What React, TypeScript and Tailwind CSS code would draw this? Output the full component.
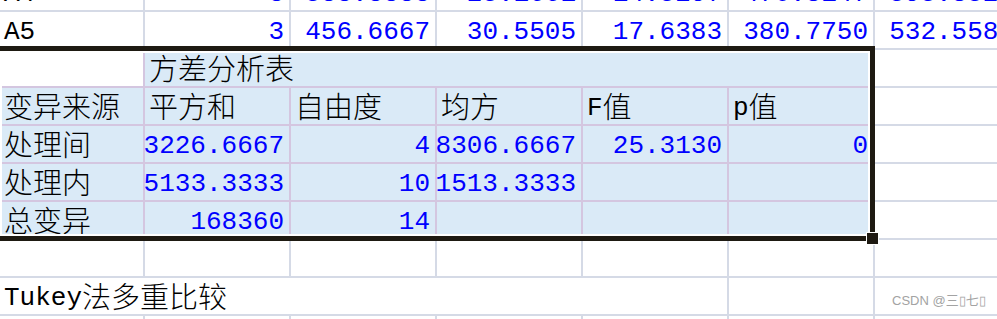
import React from 'react';

type Row = { cells: CellDef[] };
type CellDef = { t?: string; num?: boolean; sel?: boolean; active?: boolean; span?: string };

const CJK = /([\u4e00-\u9fff]+)/;

function Txt({ s }: { s: string }) {
  const parts = s.split(CJK);
  return (
    <>
      {parts.map((p, i) =>
        CJK.test(p) ? (
          <span key={i} className="align-[-3px] font-['Noto_Sans_CJK_SC',sans-serif] text-[29px] font-light">
            {p}
          </span>
        ) : (
          <React.Fragment key={i}>{p}</React.Fragment>
        )
      )}
    </>
  );
}

function Cell({ t, num, sel, active, span }: CellDef) {
  const tint = sel || active;
  return (
    <div
      className={[
        'flex h-[38px] items-end overflow-hidden whitespace-nowrap border-r-2 border-b-2',
        tint ? 'border-[#d4c6e0]' : 'border-[#d5dae6]',
        sel ? 'bg-[#daeaf7]' : 'bg-white',
        num ? 'justify-end pr-[5px] text-[#0000ff]' : 'justify-start pl-[4px] text-black',
        span ?? '',
      ].join(' ')}
    >
      {t && (
        <span className="pb-[1px] leading-[30px]">
          <Txt s={t} />
        </span>
      )}
    </div>
  );
}

const blank = (n: number, sel = false): CellDef[] => Array.from({ length: n }, () => ({ sel }));

const rows: Row[] = [
  {
    cells: [
      { t: 'A4' },
      { t: '3', num: true },
      { t: '533.3333', num: true },
      { t: '25.1661', num: true },
      { t: '14.5297', num: true },
      { t: '470.8147', num: true },
      { t: '595.8520', num: true },
    ],
  },
  {
    cells: [
      { t: 'A5' },
      { t: '3', num: true },
      { t: '456.6667', num: true },
      { t: '30.5505', num: true },
      { t: '17.6383', num: true },
      { t: '380.7750', num: true },
      { t: '532.5583', num: true },
    ],
  },
  {
    cells: [{ active: true }, { t: '方差分析表', sel: true, span: 'col-span-5' }, {}],
  },
  {
    cells: [
      { t: '变异来源', sel: true },
      { t: '平方和', sel: true },
      { t: '自由度', sel: true },
      { t: '均方', sel: true },
      { t: 'F值', sel: true },
      { t: 'p值', sel: true },
      {},
    ],
  },
  {
    cells: [
      { t: '处理间', sel: true },
      { t: '153226.6667', num: true, sel: true },
      { t: '4', num: true, sel: true },
      { t: '38306.6667', num: true, sel: true },
      { t: '25.3130', num: true, sel: true },
      { t: '0', num: true, sel: true },
      {},
    ],
  },
  {
    cells: [
      { t: '处理内', sel: true },
      { t: '15133.3333', num: true, sel: true },
      { t: '10', num: true, sel: true },
      { t: '1513.3333', num: true, sel: true },
      ...blank(2, true),
      {},
    ],
  },
  {
    cells: [
      { t: '总变异', sel: true },
      { t: '168360', num: true, sel: true },
      { t: '14', num: true, sel: true },
      ...blank(3, true),
      {},
    ],
  },
  { cells: blank(7) },
  { cells: [{ t: 'Tukey法多重比较', span: 'col-span-5' }, {}, {}] },
  { cells: blank(7) },
];

export default function App() {
  return (
    <div className="relative h-[319px] w-[997px] overflow-hidden bg-white font-['Liberation_Mono','Noto_Sans_CJK_SC',monospace] text-[26px]">
      <div className="-mt-[26px] grid w-[1021px] grid-cols-[145px_repeat(6,146px)]">
        {rows.map((r, i) => (
          <React.Fragment key={i}>
            {r.cells.map((c, j) => (
              <Cell key={j} {...c} />
            ))}
          </React.Fragment>
        ))}
      </div>

      {/* selection border */}
      <div className="pointer-events-none absolute left-[-5px] top-[46px] h-[195px] w-[880px] border-[5px] border-[#1e1a12]">
        <div className="absolute inset-0 border-2 border-white" />
      </div>
      <div className="pointer-events-none absolute left-[866px] top-[232px] h-[13px] w-[13px] border border-white bg-[#1e1a12]" />

      <div className="absolute left-[892px] top-[294px] font-['Liberation_Sans','Noto_Sans_CJK_SC',sans-serif] text-[13px] leading-none text-[#a3a3a3]">
        CSDN @三▯七▯
      </div>
    </div>
  );
}
